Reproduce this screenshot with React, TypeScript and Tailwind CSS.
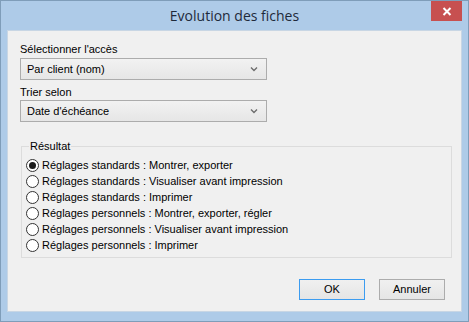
import React, { useState } from 'react';

const options = [
  'Réglages standards : Montrer, exporter',
  'Réglages standards : Visualiser avant impression',
  'Réglages standards : Imprimer',
  'Réglages personnels : Montrer, exporter, régler',
  'Réglages personnels : Visualiser avant impression',
  'Réglages personnels : Imprimer',
];

const Combo: React.FC<{ value: string }> = ({ value }) => (
  <div className="flex h-[22px] w-[247px] items-center justify-between border border-[#acacac] bg-gradient-to-b from-[#f2f2f2] to-[#e6e6e6] pl-[6px] pr-[8px]">
    <span>{value}</span>
    <svg width="8" height="6" viewBox="0 0 8 6">
      <path d="M1 1.5 L4 4.5 L7 1.5" fill="none" stroke="#6d6d6d" strokeWidth="1.4" />
    </svg>
  </div>
);

const Radio: React.FC<{ checked: boolean }> = ({ checked }) => (
  <div className="flex h-[13px] w-[13px] items-center justify-center rounded-full border border-[#333333] bg-white">
    {checked && <div className="h-[7px] w-[7px] rounded-full bg-[#1a1a1a]" />}
  </div>
);

const App: React.FC = () => {
  const [selected, setSelected] = useState(0);

  return (
    <div className="flex h-[322px] w-[469px] flex-col border border-[#7f9db9] bg-[#aecbe8] font-['Liberation_Sans',Arial,sans-serif] text-[11px] text-black">
      {/* Title bar */}
      <div className="relative flex h-[29px] items-center justify-center">
        <span className="font-['Open_Sans',sans-serif] text-[14px] text-[#1e2a3a]">Evolution des fiches</span>
        <button className="absolute right-[6px] top-0 flex h-[20px] w-[31px] items-center justify-center bg-[#c75050]">
          <svg width="10" height="9" viewBox="0 0 10 9">
            <path d="M1.5 1 L8.5 8 M8.5 1 L1.5 8" stroke="white" strokeWidth="2" />
          </svg>
        </button>
      </div>

      {/* Client area */}
      <div className="mx-[6px] mb-[9px] flex flex-1 flex-col border border-[#c8d6e4] bg-[#f0f0f0] pl-[12px] pt-[10px]">
        <div className="h-[16px] leading-[16px]">Sélectionner l'accès</div>
        <div className="mt-[1px]">
          <Combo value="Par client (nom)" />
        </div>
        <div className="mt-[4px] h-[16px] leading-[16px]">Trier selon</div>
        <div>
          <Combo value="Date d'échéance" />
        </div>

        <fieldset className="ml-[1px] mt-[17px] w-[431px] border border-[#dcdcdc] pb-[4px] pl-[4px]">
          <legend className="ml-[3px] px-[1px] leading-[14px]">Résultat</legend>
          <div className="flex flex-col pt-[4px]">
            {options.map((o, i) => (
              <label key={i} className="flex h-[16px] items-center gap-[3px]" onClick={() => setSelected(i)}>
                <Radio checked={selected === i} />
                <span>{o}</span>
              </label>
            ))}
          </div>
        </fieldset>

        <div className="flex-1" />

        <div className="flex justify-end gap-[14px] pb-[11px] pr-[16px]">
          <button className="h-[21px] w-[66px] border border-[#3c9cf0] bg-gradient-to-b from-[#f0f0f0] to-[#e5e5e5]">OK</button>
          <button className="h-[21px] w-[66px] border border-[#acacac] bg-gradient-to-b from-[#f0f0f0] to-[#e5e5e5]">Annuler</button>
        </div>
      </div>
    </div>
  );
};

export default App;
